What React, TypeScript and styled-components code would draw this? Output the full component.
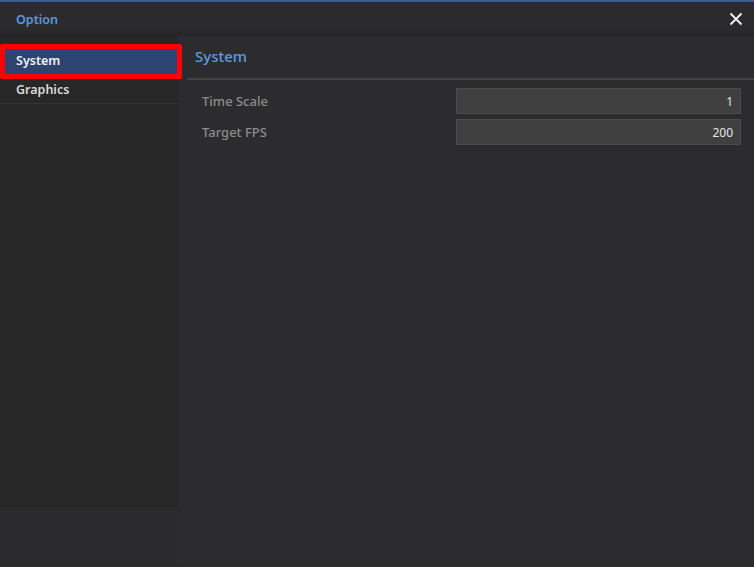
import React from "react";
import styled, { createGlobalStyle } from "styled-components";

const GlobalStyle = createGlobalStyle`
    html, body {
        margin: 0;
        padding: 0;
        background: #2c2c2f;
    }
    body {
        font-family: "Noto Sans", "Open Sans", sans-serif;
    }
`;

interface OptionRow {
    label: string;
    value: string;
}

const systemRows: OptionRow[] = [
    { label: "Time Scale", value: "1" },
    { label: "Target FPS", value: "200" },
];

const App: React.FC = () => {
    return (
        <>
            <GlobalStyle />
            <Window>
                <TitleBar>
                    <Title>Option</Title>
                    <CloseButton aria-label="close">
                        <svg width="14" height="14" viewBox="0 0 14 14">
                            <path d="M1.5 1.5 L12.5 12.5 M12.5 1.5 L1.5 12.5" stroke="#f2f2f2" strokeWidth="1.8" />
                        </svg>
                    </CloseButton>
                </TitleBar>
                <Body>
                    <Sidebar>
                        <MenuList>
                            <MenuItem selected>
                                System
                                <Highlight />
                            </MenuItem>
                            <MenuItem>Graphics</MenuItem>
                        </MenuList>
                    </Sidebar>
                    <Content>
                        <Heading>System</Heading>
                        <Rows>
                            {systemRows.map((row) => (
                                <Row key={row.label}>
                                    <Label>{row.label}</Label>
                                    <ValueBox>{row.value}</ValueBox>
                                </Row>
                            ))}
                        </Rows>
                    </Content>
                </Body>
            </Window>
        </>
    );
};

export default App;

const Window = styled.div`
    width: 754px;
    height: 567px;
    display: flex;
    flex-direction: column;
    overflow: hidden;
    background: #2c2c2f;
`;

const TitleBar = styled.div`
    height: 34px;
    flex: none;
    display: flex;
    align-items: center;
    justify-content: space-between;
    padding: 0 8px 0 16px;
    border-top: 2px solid #3b5a9c;
    background: linear-gradient(to bottom, #2b2b2d 0%, #2b2b2d 80%, #252527 100%);
`;

const Title = styled.span`
    color: #5a98de;
    font-size: 12.5px;
    font-weight: 600;
    margin-top: 1px;
`;

const CloseButton = styled.div`
    width: 20px;
    height: 20px;
    display: flex;
    align-items: center;
    justify-content: center;
    margin-top: -1px;
`;

const Body = styled.div`
    flex: 1;
    display: flex;
    min-height: 0;
`;

const Sidebar = styled.div`
    width: 178px;
    flex: none;
    display: flex;
    flex-direction: column;
    background: #2b2b2e;
`;

const MenuList = styled.div`
    height: 471px;
    padding-top: 9px;
    box-sizing: border-box;
    background: #272727;
`;

const MenuItem = styled.div<{ selected?: boolean }>`
    position: relative;
    height: ${({ selected }) => (selected ? "32px" : "27px")};
    box-sizing: border-box;
    display: flex;
    align-items: center;
    padding: 0 16px;
    font-size: 12.5px;
    font-weight: 600;
    color: ${({ selected }) => (selected ? "#f0f0f0" : "#dadada")};
    background: ${({ selected }) => (selected ? "#2e4470" : "transparent")};
    border-bottom: ${({ selected }) => (selected ? "none" : "1px solid #333336")};
    padding-bottom: ${({ selected }) => (selected ? "1px" : "2px")};
`;

const Highlight = styled.span`
    position: absolute;
    left: 0;
    right: -4px;
    top: -1px;
    bottom: -2px;
    border: 5px solid #ff0000;
    border-radius: 2px;
    pointer-events: none;
`;

const Content = styled.div`
    flex: 1;
    display: flex;
    flex-direction: column;
    background: #2c2c2f;
    padding-left: 9px;
`;

const Heading = styled.div`
    height: 44px;
    flex: none;
    display: flex;
    align-items: center;
    padding-left: 8px;
    padding-bottom: 2px;
    box-sizing: border-box;
    color: #5a9be2;
    font-size: 15px;
    font-weight: 500;
    border-bottom: 2px solid #444447;
`;

const Rows = styled.div`
    display: flex;
    flex-direction: column;
    gap: 5px;
    padding: 8px 13px 0 15px;
`;

const Row = styled.div`
    display: flex;
    align-items: center;
    justify-content: space-between;
    height: 26px;
`;

const Label = styled.span`
    color: #8c8c8c;
    font-size: 13px;
    font-weight: 500;
`;

const ValueBox = styled.div`
    width: 285px;
    height: 26px;
    box-sizing: border-box;
    display: flex;
    align-items: center;
    justify-content: flex-end;
    padding-right: 7px;
    background: #3f3f40;
    border: 1px solid #4b4b4c;
    color: #e4e4e4;
    font-size: 12px;
`;
